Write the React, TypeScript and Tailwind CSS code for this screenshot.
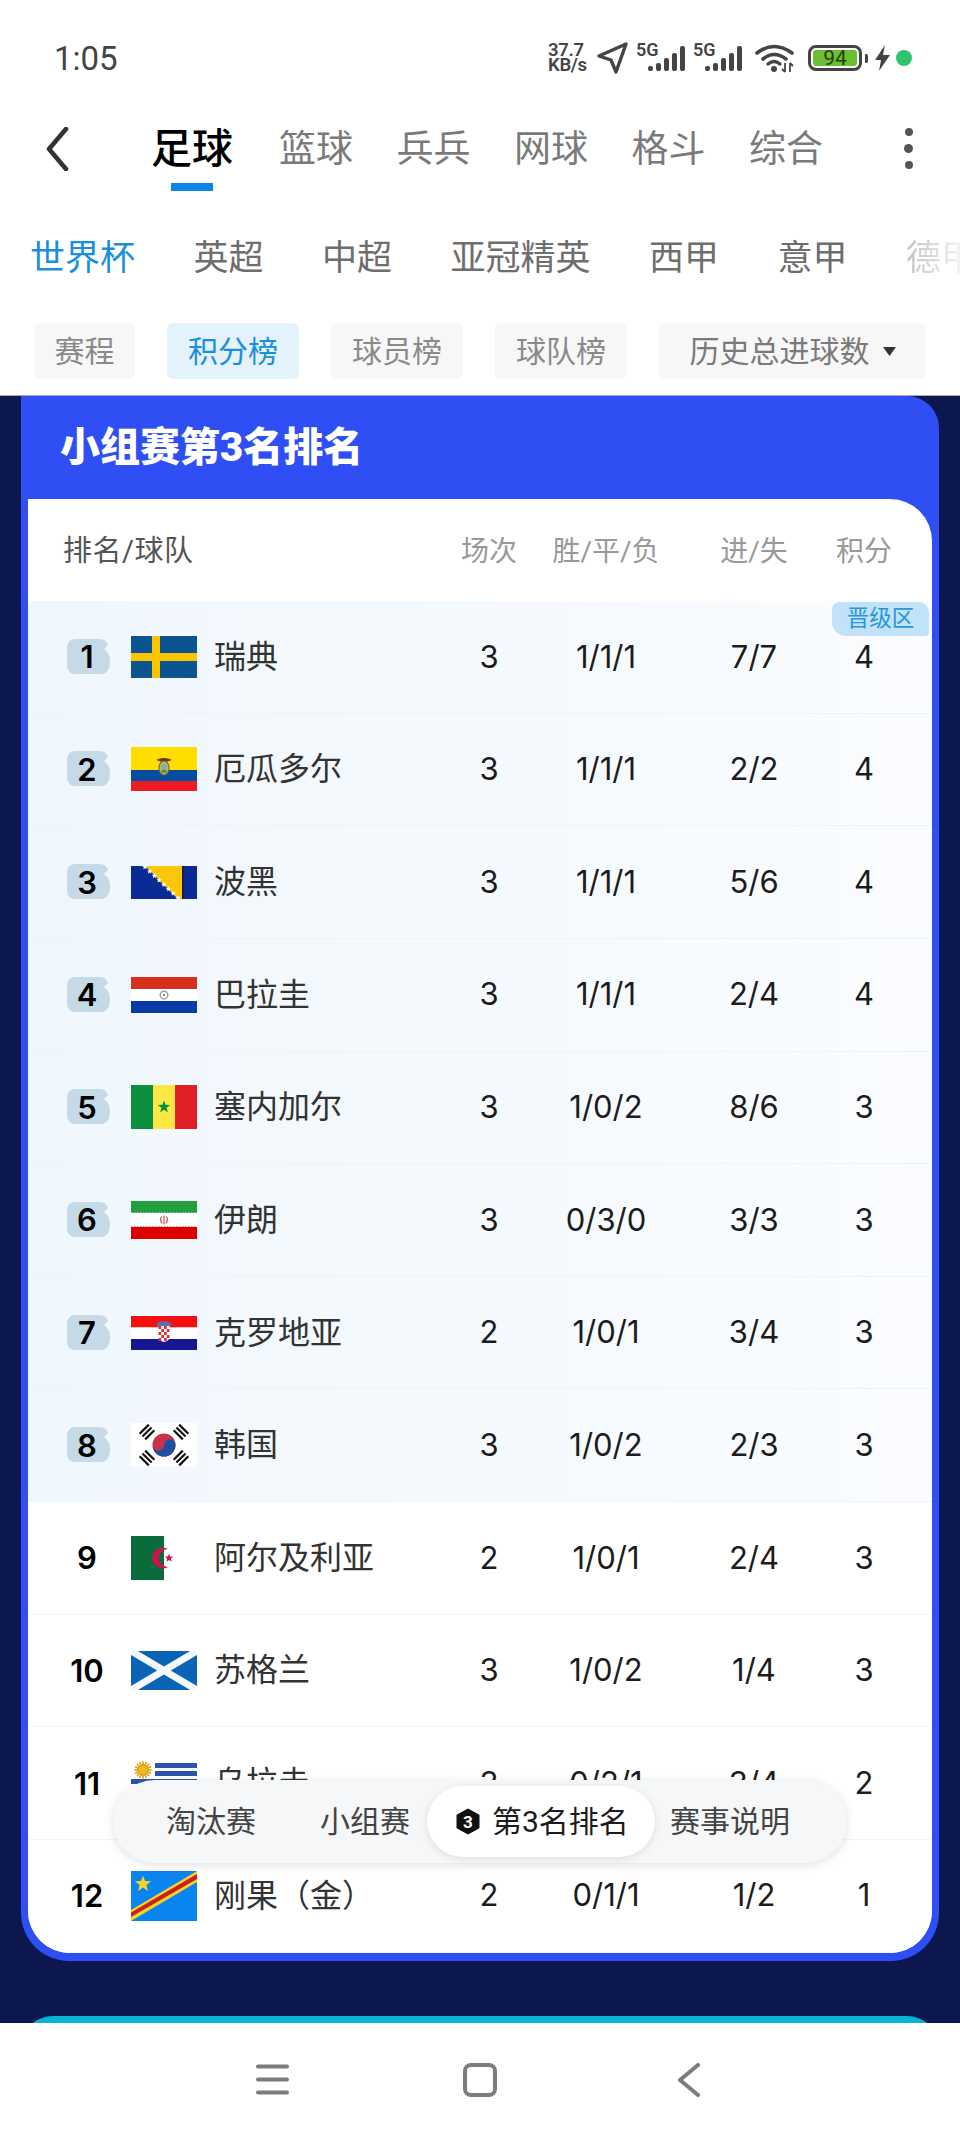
import React from 'react';

type Team = {
  rank: number;
  name: string;
  flag: keyof typeof flags;
  played: number;
  record: string;
  goals: string;
  points: number;
};

const teams: Team[] = [
  { rank: 1, name: '瑞典', flag: 'sweden', played: 3, record: '1/1/1', goals: '7/7', points: 4 },
  { rank: 2, name: '厄瓜多尔', flag: 'ecuador', played: 3, record: '1/1/1', goals: '2/2', points: 4 },
  { rank: 3, name: '波黑', flag: 'bosnia', played: 3, record: '1/1/1', goals: '5/6', points: 4 },
  { rank: 4, name: '巴拉圭', flag: 'paraguay', played: 3, record: '1/1/1', goals: '2/4', points: 4 },
  { rank: 5, name: '塞内加尔', flag: 'senegal', played: 3, record: '1/0/2', goals: '8/6', points: 3 },
  { rank: 6, name: '伊朗', flag: 'iran', played: 3, record: '0/3/0', goals: '3/3', points: 3 },
  { rank: 7, name: '克罗地亚', flag: 'croatia', played: 2, record: '1/0/1', goals: '3/4', points: 3 },
  { rank: 8, name: '韩国', flag: 'korea', played: 3, record: '1/0/2', goals: '2/3', points: 3 },
  { rank: 9, name: '阿尔及利亚', flag: 'algeria', played: 2, record: '1/0/1', goals: '2/4', points: 3 },
  { rank: 10, name: '苏格兰', flag: 'scotland', played: 3, record: '1/0/2', goals: '1/4', points: 3 },
  { rank: 11, name: '乌拉圭', flag: 'uruguay', played: 3, record: '0/2/1', goals: '3/4', points: 2 },
  { rank: 12, name: '刚果（金）', flag: 'congo', played: 2, record: '0/1/1', goals: '1/2', points: 1 },
];

const star = (cx: number, cy: number, r: number) =>
  Array.from({ length: 10 }, (_, i) => {
    const radius = i % 2 === 0 ? r : r * 0.42;
    const a = (Math.PI / 5) * i - Math.PI / 2;
    return `${cx + radius * Math.cos(a)},${cy + radius * Math.sin(a)}`;
  }).join(' ');

const flags = {
  sweden: (
    <svg width="66" height="42" viewBox="0 0 66 42">
      <rect width="66" height="42" fill="#0b5490" />
      <rect x="21" width="8" height="42" fill="#fcc500" />
      <rect y="17" width="66" height="8" fill="#fcc500" />
    </svg>
  ),
  ecuador: (
    <svg width="66" height="44" viewBox="0 0 66 44">
      <rect width="66" height="23" fill="#ffdd00" />
      <rect y="23" width="66" height="11" fill="#034ea2" />
      <rect y="34" width="66" height="10" fill="#ed1c24" />
      <path d="M25 13 Q33 9 41 13 L35 15 H31Z" fill="#5b3a1e" />
      <ellipse cx="33" cy="21" rx="5" ry="7" fill="#c9b458" stroke="#7a6a3a" strokeWidth="1.2" />
      <ellipse cx="33" cy="20" rx="2.6" ry="3.2" fill="#6fb0c9" />
      <rect x="30.5" y="23" width="5" height="2.5" fill="#4d8a3a" />
    </svg>
  ),
  bosnia: (
    <svg width="66" height="33" viewBox="0 0 66 33">
      <rect width="66" height="33" fill="#0a2a96" />
      <path d="M14 0 H51 V33 H47Z" fill="#fcc60a" />
      <rect x="51" width="1.5" height="33" fill="#1a1a2a" />
      {[0, 1, 2, 3, 4, 5, 6, 7].map((i) => (
        <polygon key={i} points={star(14 + i * 4.7, 1 + i * 4.4, 2.9)} fill="#ffffff" />
      ))}
    </svg>
  ),
  paraguay: (
    <svg width="66" height="36" viewBox="0 0 66 36">
      <rect width="66" height="12" fill="#d5301c" />
      <rect y="12" width="66" height="12" fill="#ffffff" />
      <rect y="24" width="66" height="12" fill="#0a3aa4" />
      <circle cx="33" cy="18" r="3.8" fill="#ffffff" stroke="#9aa39a" strokeWidth="1.4" />
      <circle cx="33" cy="18" r="1.2" fill="#7c8a72" />
    </svg>
  ),
  senegal: (
    <svg width="66" height="44" viewBox="0 0 66 44">
      <rect width="22" height="44" fill="#0a8f3f" />
      <rect x="22" width="22" height="44" fill="#fbe843" />
      <rect x="44" width="22" height="44" fill="#e01f26" />
      <polygon points={star(33, 22, 6.5)} fill="#0a8f3f" />
    </svg>
  ),
  iran: (
    <svg width="66" height="38" viewBox="0 0 66 38">
      <rect width="66" height="12" fill="#239f40" />
      <rect y="12" width="66" height="14" fill="#ffffff" />
      <rect y="26" width="66" height="12" fill="#da0000" />
      <path d="M0 12 H66" stroke="#ffffff" strokeWidth="1.2" strokeDasharray="1.5 1.5" />
      <path d="M0 26 H66" stroke="#da0000" strokeWidth="1.2" strokeDasharray="1.5 1.5" />
      <path
        d="M33 14.5 V23.5 M30.5 15.5 Q28.5 19 31 22.5 M35.5 15.5 Q37.5 19 35 22.5"
        stroke="#d03a3a"
        strokeWidth="1.1"
        fill="none"
      />
    </svg>
  ),
  croatia: (
    <svg width="66" height="34" viewBox="0 0 66 34">
      <rect width="66" height="11.5" fill="#f50f0f" />
      <rect y="11.5" width="66" height="11.5" fill="#ffffff" />
      <rect y="23" width="66" height="11" fill="#171796" />
      <path d="M26 7 Q33 3 40 7 V10 H26Z" fill="#5a6fb0" />
      <path d="M27.5 10 H38.5 V21 Q38.5 25 33 26 Q27.5 25 27.5 21Z" fill="#ffffff" />
      {[0, 1, 2, 3, 4].map((r) =>
        [0, 1, 2, 3].map((c) =>
          (r + c) % 2 === 0 ? (
            <rect key={`${r}-${c}`} x={27.5 + c * 2.75} y={10 + r * 3} width="2.75" height="3" fill="#d9303a" />
          ) : null
        )
      )}
    </svg>
  ),
  korea: (
    <svg width="66" height="44" viewBox="0 0 66 44">
      <rect width="66" height="44" fill="#ffffff" />
      <circle cx="33" cy="22" r="11.5" fill="#c8324a" />
      <path d="M21.5 22 A11.5 11.5 0 0 0 44.5 22 A5.75 5.75 0 0 0 33 22 A5.75 5.75 0 0 1 21.5 22Z" fill="#1f4f9e" />
      {[
        [-1, -1],
        [1, -1],
        [-1, 1],
        [1, 1],
      ].map(([sx, sy]) => {
        const angle = sx * sy > 0 ? -45 : 45;
        return (
          <g key={`${sx}${sy}`} transform={`translate(${33 + sx * 17} ${22 + sy * 13}) rotate(${angle})`}>
            <rect x="-6.5" y="-5" width="13" height="2.2" fill="#111111" />
            <rect x="-6.5" y="-1.1" width="13" height="2.2" fill="#111111" />
            <rect x="-6.5" y="2.8" width="13" height="2.2" fill="#111111" />
          </g>
        );
      })}
    </svg>
  ),
  algeria: (
    <svg width="66" height="44" viewBox="0 0 66 44">
      <rect width="33" height="44" fill="#0a6b3c" />
      <rect x="33" width="33" height="44" fill="#ffffff" />
      <path d="M37 13 A10.5 10.5 0 1 0 37 31 A8.5 8.5 0 1 1 37 13Z" fill="#c2184a" />
      <polygon points={star(38, 22, 4.5)} fill="#c2184a" />
    </svg>
  ),
  scotland: (
    <svg width="66" height="39" viewBox="0 0 66 39">
      <rect width="66" height="39" fill="#0a63b4" />
      <path d="M0 0 L66 39 M66 0 L0 39" stroke="#f2f8fb" strokeWidth="7" />
    </svg>
  ),
  uruguay: (
    <svg width="66" height="44" viewBox="0 0 66 44">
      <rect width="66" height="44" fill="#ffffff" />
      {[2, 10, 18, 26, 34].map((y, i) => (
        <rect key={y} x={i < 2 ? 24 : 0} y={y} width={i < 2 ? 42 : 66} height="5" fill="#2a55a8" />
      ))}
      {Array.from({ length: 16 }, (_, i) => (
        <rect key={i} x="11.3" y="0.5" width="1.4" height="17" fill="#e8a81c" transform={`rotate(${i * 22.5} 12 9)`} />
      ))}
      <circle cx="12" cy="9" r="5" fill="#f2b91f" stroke="#b8861a" strokeWidth="0.6" />
    </svg>
  ),
  congo: (
    <svg width="66" height="50" viewBox="0 0 66 50">
      <rect width="66" height="50" fill="#0a84f0" />
      <path d="M0 50 V39 L66 0 V11 L0 50Z" fill="#f5d327" />
      <path d="M0 46 V41.5 L66 3 V8 L0 46Z" fill="#ce1f1a" />
      <polygon points={star(12, 13, 8.5)} fill="#f5d327" />
    </svg>
  ),
};

const SignalIcon = () => (
  <svg width="52" height="32" viewBox="0 0 52 32">
    <text x="1" y="14" fontSize="18" fontWeight="600" fill="#444444" fontFamily="Roboto, sans-serif">
      5G
    </text>
    {[5, 8, 13, 18, 25].map((h, i) => (
      <rect key={i} x={13 + i * 8} y={29 - h} width="5" height={h} rx="2" fill="#444444" />
    ))}
  </svg>
);

const StatusBar = () => (
  <div className="flex h-[116px] items-center pl-[54px] pr-[48px] text-[#444444]">
    <span className="pt-[1px] text-[33px]">1:05</span>
    <div className="ml-auto flex items-center">
      <div className="w-[42px] whitespace-nowrap text-[18.5px] font-semibold leading-[15px] tracking-[-0.3px]">
        <div>37.7</div>
        <div>KB/s</div>
      </div>
      <svg className="ml-[7px]" width="31" height="32" viewBox="0 0 31 32" fill="none">
        <path d="M29 2 L2 14 L14 18 L19 30Z" stroke="#444444" strokeWidth="3.4" strokeLinejoin="round" />
      </svg>
      <div className="ml-[7px]">
        <SignalIcon />
      </div>
      <div className="ml-[5px]">
        <SignalIcon />
      </div>
      <svg className="ml-[11px]" width="40" height="30" viewBox="0 0 40 30" fill="none">
        <path d="M2 10 Q19 -3 37 10" stroke="#444444" strokeWidth="3.6" strokeLinecap="round" />
        <path d="M8 16 Q19 7 31 16" stroke="#444444" strokeWidth="3.6" strokeLinecap="round" />
        <path d="M13 21 Q19 16 25 21" stroke="#444444" strokeWidth="3.4" strokeLinecap="round" />
        <circle cx="19" cy="26" r="3" fill="#444444" />
        <path d="M30 20 V29 M27 26 L30 29 M35 20 V29 M35 20 L38 23" stroke="#444444" strokeWidth="1.8" />
      </svg>
      <div className="ml-[13px] flex h-[26px] w-[54px] rounded-[8px] border-[3px] border-[#444444] p-[2px]">
        <div className="flex flex-1 items-center justify-center rounded-[3px] bg-[#6cbe32] text-[21px] leading-none text-[#24400c]">
          94
        </div>
      </div>
      <div className="ml-[3px] h-[9px] w-[3px] rounded-r-[2px] bg-[#444444]" />
      <svg className="ml-[7px]" width="15" height="26" viewBox="0 0 15 26">
        <path d="M10 0 L0 15 H6 L4 26 L15 10 H8Z" fill="#444444" />
      </svg>
      <div className="ml-[6px] h-[16px] w-[16px] rounded-full bg-[#2fc46b]" />
    </div>
  </div>
);

const SportNav = () => (
  <div className="flex h-[111px] items-start">
    <svg className="ml-[45px] mt-[11px]" width="24" height="44" viewBox="0 0 24 44" fill="none">
      <path d="M21 2 L4 22 L21 42" stroke="#333333" strokeWidth="4.6" strokeLinecap="round" strokeLinejoin="round" />
    </svg>
    <div className="ml-[82px] flex flex-col items-center">
      <span className="flex h-[64px] items-center pt-[3px] text-[41px] font-medium text-black">足球</span>
      <div className="mt-[3px] h-[8px] w-[42px] bg-[#0a84e8]" />
    </div>
    <div className="ml-[46px] flex h-[64px] items-center gap-[43.5px] pt-[3px] text-[37px] text-[#7a7a7a]">
      <span>篮球</span>
      <span>兵兵</span>
      <span>网球</span>
      <span>格斗</span>
      <span>综合</span>
    </div>
    <div className="ml-auto mr-[47px] flex h-[64px] flex-col items-center justify-center gap-[8px]">
      <div className="h-[8px] w-[8px] rounded-full bg-[#555555]" />
      <div className="h-[9px] w-[9px] rounded-full bg-[#555555]" />
      <div className="h-[8px] w-[8px] rounded-full bg-[#555555]" />
    </div>
  </div>
);

const LeagueNav = () => (
  <div className="flex h-[60px] items-center gap-[58.5px] overflow-hidden whitespace-nowrap pl-[30px] pt-[4px] text-[35px] text-[#6e6e6e]">
    <span className="text-[#1a8fdc]">世界杯</span>
    <span>英超</span>
    <span>中超</span>
    <span>亚冠精英</span>
    <span>西甲</span>
    <span>意甲</span>
    <span className="bg-gradient-to-r from-[#c4c4c4] to-[#ffffff] bg-clip-text text-transparent">德甲</span>
  </div>
);

const chipClass = 'flex h-[56px] items-center justify-center rounded-[6px] text-[30px]';

const ChipRow = () => (
  <div className="mt-[36px] flex gap-[32px] border-b border-[#a8abb8] pb-[16px] pl-[34px]">
    <div className={`${chipClass} w-[101px] bg-[#f7f7f7] text-[#8a8a8a]`}>赛程</div>
    <div className={`${chipClass} w-[132px] bg-[#e3f2fb] text-[#1a8fdc]`}>积分榜</div>
    <div className={`${chipClass} w-[132px] bg-[#f7f7f7] text-[#8a8a8a]`}>球员榜</div>
    <div className={`${chipClass} w-[132px] bg-[#f7f7f7] text-[#8a8a8a]`}>球队榜</div>
    <div className={`${chipClass} w-[267px] gap-[13px] bg-[#f7f7f7] text-[#7a7a7a]`}>
      <span>历史总进球数</span>
      <svg width="13" height="9" viewBox="0 0 13 9">
        <path d="M0 0 H13 L6.5 9Z" fill="#333333" />
      </svg>
    </div>
  </div>
);

const RankBadge = ({ rank }: { rank: number }) => (
  <div className="relative flex h-[36px] w-[44px] items-center justify-center font-['Inter',sans-serif] text-[31px] font-semibold leading-none text-black">
    {rank <= 8 && (
      <svg className="absolute left-[1px] top-0" width="44" height="36" viewBox="0 0 44 36">
        <path
          d="M10 0 H34 Q40 0 42 6 L38 10 Q44 14 44 22 Q44 35 34 35 H10 Q1 35 1 26 V9 Q1 0 10 0Z"
          fill="#c5d9e7"
        />
      </svg>
    )}
    <span className="relative">{rank}</span>
  </div>
);

const columns = 'grid grid-cols-[1fr_100px_134px_162px_58px] items-center pr-[39px] text-center';

const TeamRow = ({ team }: { team: Team }) => {
  const promoted = team.rank <= 8;
  return (
    <div
      className={`${columns} relative h-[112.64px] border-b text-[31px] text-[#1c1c1c] ${
        promoted
          ? 'border-[#eef3f8] bg-gradient-to-r from-[#f0f7fc] to-[#fafcff]'
          : 'border-[#f5f5f5] bg-white'
      }`}
    >
      <div className="flex items-center pl-[37px] text-left">
        <RankBadge rank={team.rank} />
        <div className="ml-[22px] flex w-[66px] justify-center">{flags[team.flag]}</div>
        <span className="ml-[17px] text-[32px] text-[#333333]">{team.name}</span>
      </div>
      <span className="font-['Inter',sans-serif]">{team.played}</span>
      <span className="font-['Inter',sans-serif]">{team.record}</span>
      <span className="font-['Inter',sans-serif]">{team.goals}</span>
      <span className="font-['Inter',sans-serif]">{team.points}</span>
      {team.rank === 1 && (
        <div className="absolute right-[3px] top-[1px] flex h-[34px] w-[97px] items-center justify-center rounded-bl-[14px] rounded-br-[4px] rounded-tl-[8px] rounded-tr-[10px] bg-[#c2e2f8] text-[22.5px] text-[#2a97d8]">
          晋级区
        </div>
      )}
    </div>
  );
};

const StandingsCard = () => (
  <div className="mx-[21px] rounded-b-[48px] rounded-tr-[32px] bg-[#2f4ff5] px-[7px] pb-[8px]">
    <div className="flex h-[103px] items-center pl-[32px] text-[40px] font-black text-white">小组赛第3名排名</div>
    <div className="overflow-hidden rounded-b-[42px] rounded-tr-[42px] bg-white">
      <div className={`${columns} h-[102px] pt-[3px] text-[28px] text-[#999999]`}>
        <span className="pl-[35px] text-left text-[29px] tracking-[0.5px] text-[#555555]">排名/球队</span>
        <span>场次</span>
        <span>胜/平/负</span>
        <span>进/失</span>
        <span>积分</span>
      </div>
      {teams.map((team) => (
        <TeamRow key={team.rank} team={team} />
      ))}
    </div>
  </div>
);

const StageSwitcher = () => (
  <div className="absolute left-[113px] top-[1780px] flex h-[83px] w-[734px] items-center rounded-full bg-[#f6f7f8] pl-[53px] text-[30px] text-[#444444] shadow-[0_2px_10px_rgba(0,0,0,0.12)]">
    <span>淘汰赛</span>
    <span className="ml-[64px]">小组赛</span>
    <div className="ml-[17px] flex h-[71px] w-[228px] items-center rounded-full bg-white pl-[29px] text-[#1c1c1c] shadow-[0_2px_8px_rgba(0,0,0,0.1)]">
      <svg width="24" height="27" viewBox="0 0 24 27">
        <path d="M12 1 L23 7 V20 L12 26 L1 20 V7Z" fill="#111111" stroke="#111111" strokeLinejoin="round" />
        <text x="12" y="19.5" textAnchor="middle" fontSize="17" fontWeight="700" fill="#ffffff" fontFamily="Roboto, sans-serif">
          3
        </text>
      </svg>
      <span className="ml-[12px]">第3名排名</span>
    </div>
    <span className="ml-[15px]">赛事说明</span>
  </div>
);

const SystemNav = () => (
  <div className="flex h-[113px] items-center bg-white pl-[256px]">
    <svg width="33" height="31" viewBox="0 0 33 31" fill="none">
      <path d="M2 2.5 H31 M2 15.5 H31 M2 28.5 H31" stroke="#7c7c7c" strokeWidth="4" strokeLinecap="round" />
    </svg>
    <svg className="ml-[174px]" width="34" height="34" viewBox="0 0 34 34" fill="none">
      <rect x="2" y="2" width="30" height="30" rx="6" stroke="#7c7c7c" strokeWidth="4" />
    </svg>
    <svg className="ml-[180px]" width="23" height="34" viewBox="0 0 23 34" fill="none">
      <path d="M21 2 L3 17 L21 32" stroke="#7c7c7c" strokeWidth="4" strokeLinecap="round" strokeLinejoin="round" />
    </svg>
  </div>
);

export default function App() {
  return (
    <div className="relative flex h-[2136px] w-[960px] flex-col overflow-hidden bg-white font-['Roboto','Noto_Sans_CJK_SC',sans-serif]">
      <StatusBar />
      <SportNav />
      <LeagueNav />
      <ChipRow />
      <main className="flex-1 overflow-hidden bg-[#0c174f]">
        <StandingsCard />
        <div className="mx-[21px] mt-[55px] h-[40px] rounded-t-[32px] bg-[#0ab4d2]" />
      </main>
      <SystemNav />
      <StageSwitcher />
    </div>
  );
}
